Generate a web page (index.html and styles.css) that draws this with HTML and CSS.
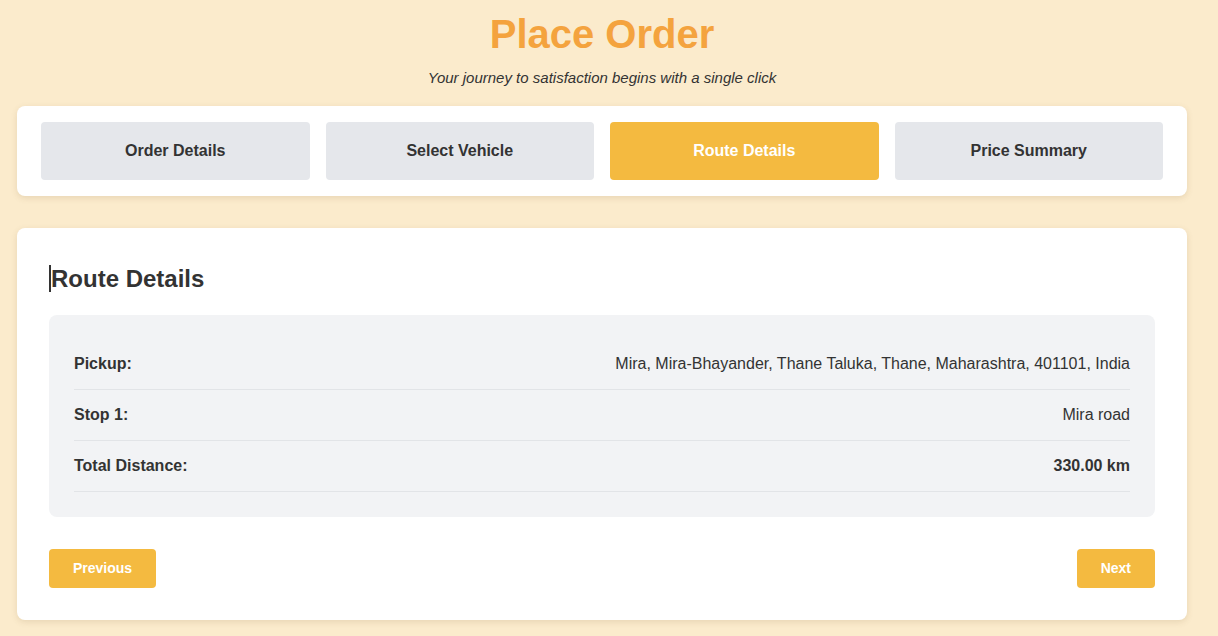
FILE: index.html
```html
<!DOCTYPE html>
<html lang="en">
<head>
<meta charset="utf-8">
<title>Place Order</title>
<link rel="stylesheet" href="styles.css">
</head>
<body>
<div class="page">
  <h1 class="title">Place Order</h1>
  <p class="subtitle">Your journey to satisfaction begins with a single click</p>

  <div class="card steps">
    <div class="step">Order Details</div>
    <div class="step">Select Vehicle</div>
    <div class="step active">Route Details</div>
    <div class="step">Price Summary</div>
  </div>

  <div class="card main">
    <h2 class="heading"><span class="caret"></span>Route Details</h2>
    <div class="route-box">
      <div class="row">
        <span class="label">Pickup:</span>
        <span class="value">Mira, Mira-Bhayander, Thane Taluka, Thane, Maharashtra, 401101, India</span>
      </div>
      <div class="row">
        <span class="label">Stop 1:</span>
        <span class="value">Mira road</span>
      </div>
      <div class="row">
        <span class="label">Total Distance:</span>
        <span class="value strong">330.00 km</span>
      </div>
    </div>
    <div class="actions">
      <button class="btn">Previous</button>
      <button class="btn">Next</button>
    </div>
  </div>
</div>
</body>
</html>
```

FILE: styles.css
```css
* { box-sizing: border-box; }

body {
  margin: 0;
  background: #fbebcc;
  font-family: "Liberation Sans", Arial, sans-serif;
  color: #333333;
}

.page {
  padding: 11px 31px 16px 17px;
}

.title {
  margin: 0;
  text-align: center;
  font-size: 40px;
  line-height: 46px;
  font-weight: 700;
  color: #f4a33e;
}

.subtitle {
  margin: 12px 0 20px;
  text-align: center;
  font-size: 15px;
  line-height: 17px;
  font-style: italic;
  color: #333333;
}

.card {
  background: #ffffff;
  border-radius: 8px;
  box-shadow: 0 2px 6px rgba(120, 90, 40, 0.15);
}

.steps {
  display: grid;
  grid-template-columns: repeat(4, 1fr);
  gap: 16px;
  padding: 16px 24px;
}

.step {
  background: #e5e7eb;
  border-radius: 4px;
  padding: 20px 8px;
  line-height: 18px;
  text-align: center;
  font-size: 16px;
  font-weight: 700;
  color: #333333;
}

.step.active {
  background: #f4ba40;
  color: #ffffff;
}

.main {
  margin-top: 32px;
  padding: 32px;
}

.heading {
  margin: 5px 0 23px;
  font-size: 24px;
  line-height: 27px;
  font-weight: 700;
  color: #333333;
  display: flex;
  align-items: center;
}

.caret {
  display: inline-block;
  width: 2px;
  height: 27px;
  background: #333333;
}

.route-box {
  background: #f2f3f5;
  border-radius: 8px;
  padding: 24px 25px 25px;
}

.row {
  display: flex;
  justify-content: space-between;
  align-items: center;
  padding: 16px 0;
  line-height: 18px;
  font-size: 16px;
  border-bottom: 1px solid #e2e4e7;
}

.label {
  font-weight: 700;
}

.value {
  text-align: right;
}

.value.strong {
  font-weight: 700;
}

.actions {
  display: flex;
  justify-content: space-between;
  margin-top: 32px;
}

.btn {
  background: #f4ba40;
  color: #ffffff;
  border: none;
  border-radius: 4px;
  padding: 11px 24px;
  font-family: "Liberation Sans", Arial, sans-serif;
  font-size: 14px;
  line-height: 17px;
  font-weight: 700;
}
```
